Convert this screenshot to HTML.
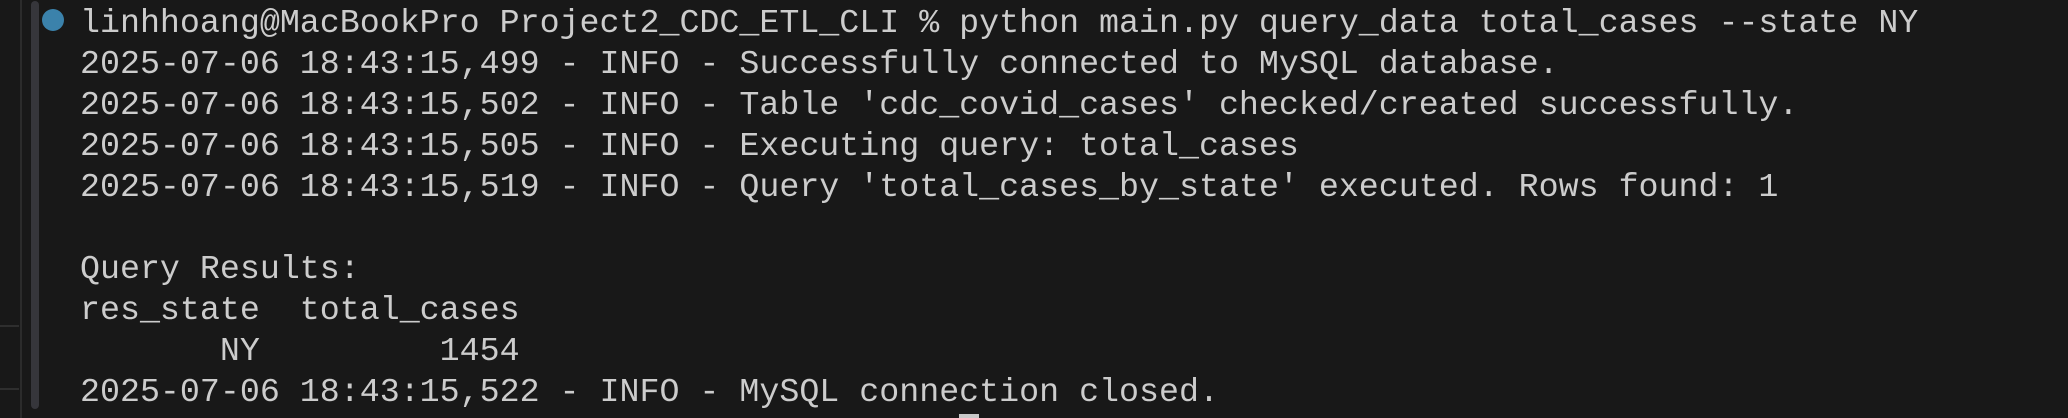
<!DOCTYPE html>
<html style="width:2068px;height:418px;overflow:hidden;"><head><meta charset="utf-8"><style>
html,body{margin:0;padding:0;}
body{width:2068px;height:418px;background:#181818;position:relative;overflow:hidden;}
.vl{position:absolute;left:20px;top:0;width:2px;height:418px;background:#2b2b2b;}
.hl{position:absolute;left:0;width:19px;height:2px;background:#2e2e2e;}
.sb{position:absolute;left:31px;top:1px;width:8px;height:408px;background:#36363b;border-radius:4px;}
.dot{position:absolute;left:42px;top:9px;width:22px;height:22px;border-radius:50%;background:#3b82ab;}
.clip{position:absolute;left:80px;top:0;width:1988px;height:418px;overflow:hidden;}
pre{margin:0;padding-top:3px;font-family:"Liberation Mono",monospace;font-size:33.3px;line-height:41px;color:#cccccc;white-space:pre;}
.cur{display:inline-block;width:20px;height:34px;background:#c8c8c8;vertical-align:-6px;}
</style></head><body>
<div class="vl"></div>
<div class="hl" style="top:325px"></div>
<div class="hl" style="top:388px"></div>
<div class="sb"></div>
<div class="dot"></div>
<div class="clip"><pre>linhhoang@MacBookPro Project2_CDC_ETL_CLI % python main.py query_data total_cases --state NY
2025-07-06 18:43:15,499 - INFO - Successfully connected to MySQL database.
2025-07-06 18:43:15,502 - INFO - Table 'cdc_covid_cases' checked/created successfully.
2025-07-06 18:43:15,505 - INFO - Executing query: total_cases
2025-07-06 18:43:15,519 - INFO - Query 'total_cases_by_state' executed. Rows found: 1

Query Results:
res_state  total_cases
       NY         1454
2025-07-06 18:43:15,522 - INFO - MySQL connection closed.
linhhoang@MacBookPro Project2_CDC_ETL_CLI % <span class="cur"></span></pre></div>
</body></html>
